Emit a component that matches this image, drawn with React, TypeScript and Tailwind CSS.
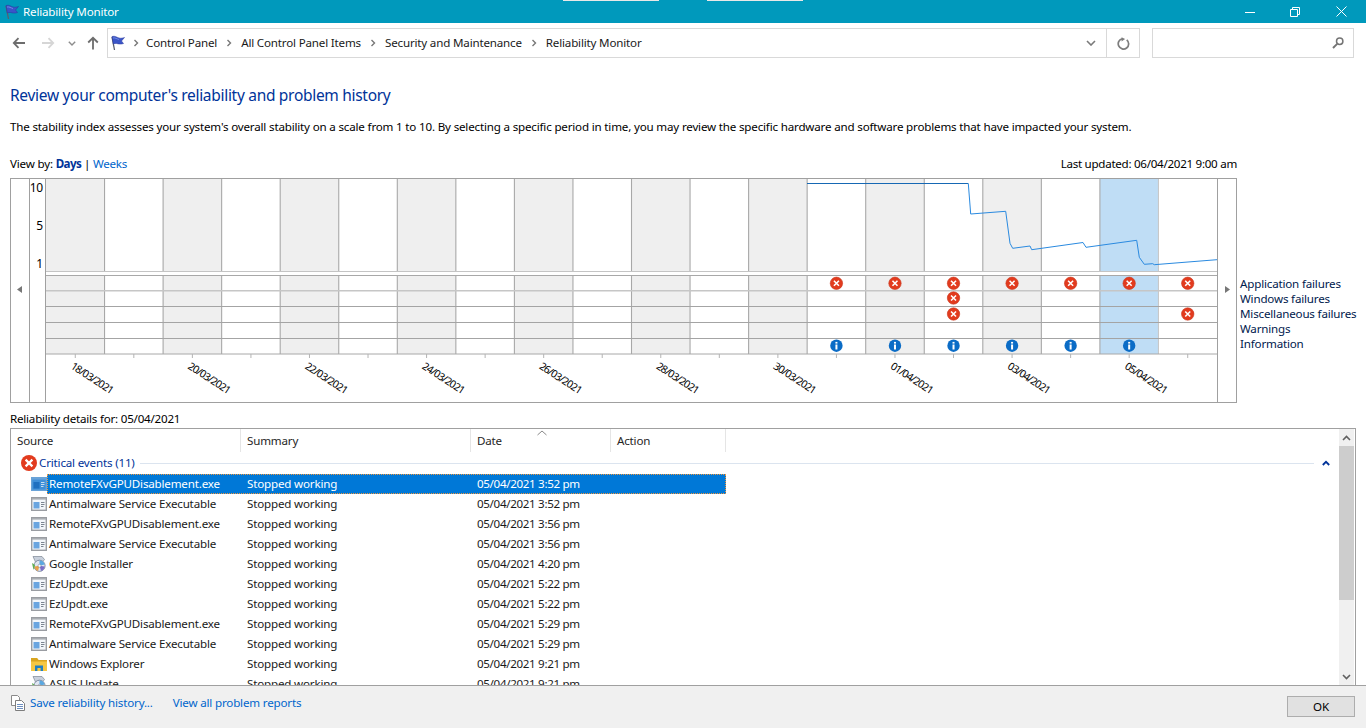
import React from "react";

const F = "[font-family:'Noto_Sans',sans-serif]";
const COL = 58.55;
const X0 = 46;
const colX = (i: number) => X0 + COL * i;
const colC = (i: number) => X0 + COL * i + COL / 2;

function Flag({ className }: { className: string }) {
  return (
    <svg viewBox="0 0 16 16" className={className}>
      <path d="M3 2 L5.5 15" stroke="#5a5f70" strokeWidth="1.3" fill="none" />
      <path d="M3 1.5 C6 0.5 8 2.5 10 3 C12 3.5 14 3 15.5 2.5 L12.5 6 L14.5 8.5 C12 9.5 9.5 9 7.5 8.5 C6.5 8.2 5 8.5 4.3 9 Z" fill="#3a55c8" stroke="#26379a" strokeWidth="0.5" />
      <path d="M4 3 C6 2.5 8 4 10 4.5" stroke="#7f95e8" strokeWidth="0.8" fill="none" />
    </svg>
  );
}

function Sep() {
  return (
    <svg viewBox="0 0 6 8" className="w-[6px] h-[8px] shrink-0">
      <path d="M1.5 1 L4.5 4 L1.5 7" stroke="#777" strokeWidth="1.4" fill="none" />
    </svg>
  );
}

function AppIcon({ selected }: { selected?: boolean }) {
  return (
    <svg viewBox="0 0 16 14" className="w-[16px] h-[14px] shrink-0">
      <rect x="0.7" y="0.7" width="14.6" height="12.6" fill={selected ? "#3f8fd8" : "#f3f6fa"} stroke={selected ? "#6aa3d8" : "#9a9da2"} strokeWidth="1.4" />
      <rect x="1" y="1" width="14" height="1.6" fill={selected ? "#6aa3d8" : "#a9adb2"} />
      <rect x="2.5" y="5" width="6" height="6.5" fill={selected ? "#1f70c0" : "#6aa5e0"} />
      <path d="M10 5.5h3.5M10 7.5h3.5M10 9.5h2.5" stroke={selected ? "#c5def2" : "#7b8490"} strokeWidth="1" />
    </svg>
  );
}

function InstallerIcon() {
  return (
    <svg viewBox="0 0 16 16" className="w-[16px] h-[16px] shrink-0">
      <path d="M2 0.5h9l2.5 3-2 2.5H4.5z" fill="#c8d0dc" stroke="#7d8794" strokeWidth="0.7" />
      <circle cx="8.5" cy="9.8" r="5.6" fill="#dfe6f2" stroke="#6d7890" strokeWidth="0.8" />
      <path d="M8.5 9.8 L8.5 4.5 A5.3 5.3 0 0 1 13.6 8.5 Z" fill="#5aa8e0" />
      <path d="M8.5 9.8 L13.6 10.5 A5.3 5.3 0 0 1 10 15 Z" fill="#7a6cc8" />
      <path d="M8.5 9.8 L7 15 A5.3 5.3 0 0 1 3.3 10.5 Z" fill="#e8a24a" />
      <circle cx="8.5" cy="9.8" r="1.5" fill="#fff" stroke="#6d7890" strokeWidth="0.5" />
      <path d="M1 7l3 2-1.5 5z" fill="#5fae52" />
    </svg>
  );
}

function FolderIcon() {
  return (
    <svg viewBox="0 0 16 14" className="w-[16px] h-[14px] shrink-0">
      <path d="M0 1h6l1.5 2H16v11H0z" fill="#f5c743" />
      <path d="M0 1h6l1.5 2H16v1.4H0z" fill="#d9a520" />
      <path d="M4 13.9V8.5h8v5.4h-2.4v-3H6.4v3z" fill="#1f7fc4" />
    </svg>
  );
}

type Row = { name: string; time: string; icon: "app" | "inst" | "folder" };
const rows: Row[] = [
  { name: "RemoteFXvGPUDisablement.exe", time: "3:52 pm", icon: "app" },
  { name: "Antimalware Service Executable", time: "3:52 pm", icon: "app" },
  { name: "RemoteFXvGPUDisablement.exe", time: "3:56 pm", icon: "app" },
  { name: "Antimalware Service Executable", time: "3:56 pm", icon: "app" },
  { name: "Google Installer", time: "4:20 pm", icon: "inst" },
  { name: "EzUpdt.exe", time: "5:22 pm", icon: "app" },
  { name: "EzUpdt.exe", time: "5:22 pm", icon: "app" },
  { name: "RemoteFXvGPUDisablement.exe", time: "5:29 pm", icon: "app" },
  { name: "Antimalware Service Executable", time: "5:29 pm", icon: "app" },
  { name: "Windows Explorer", time: "9:21 pm", icon: "folder" },
  { name: "ASUS Update", time: "9:21 pm", icon: "inst" },
];

function Err({ x, y }: { x: number; y: number }) {
  return (
    <g>
      <circle cx={x} cy={y} r="6.2" fill="#e23b1e" stroke="#c9381f" strokeWidth="0.6" />
      <path d={`M${x - 2.5} ${y - 2.5}L${x + 2.5} ${y + 2.5}M${x + 2.5} ${y - 2.5}L${x - 2.5} ${y + 2.5}`} stroke="#fff" strokeWidth="1.6" />
    </g>
  );
}

function Info({ x, y }: { x: number; y: number }) {
  return (
    <g>
      <circle cx={x} cy={y} r="6.2" fill="#0b6cc6" />
      <rect x={x - 1} y={y - 3.8} width="2" height="1.7" fill="#fff" />
      <rect x={x - 1} y={y - 1.2} width="2" height="5" fill="#fff" />
    </g>
  );
}

const labels = ["18/03/2021", "20/03/2021", "22/03/2021", "24/03/2021", "26/03/2021", "28/03/2021", "30/03/2021", "01/04/2021", "03/04/2021", "05/04/2021"];
const hLines = [290.7, 306.5, 322.5, 338.5];

function Chart() {
  const cols = Array.from({ length: 20 }, (_, i) => i);
  return (
    <svg viewBox="10 178 1227 225" className="w-[1227px] h-[225px] shrink-0" fontFamily="'Noto Sans',sans-serif">
      {cols.map((i) =>
        i === 18 ? (
          <rect key={i} x={colX(i)} y={179} width={COL} height={175} fill="#bfddf5" />
        ) : i % 2 === 0 ? (
          <rect key={i} x={colX(i)} y={179} width={COL} height={175} fill="#efefef" />
        ) : null
      )}
      <rect x="46" y="271" width="1171" height="4" fill="#fff" />
      {cols.slice(1).map((i) => (
        <g key={i}>
          <line x1={colX(i)} x2={colX(i)} y1="179" y2="271" stroke={i === 19 ? "#c8c8c8" : "#a8a8a8"} strokeWidth="1.1" />
          <line x1={colX(i)} x2={colX(i)} y1="275" y2="354" stroke={i === 19 ? "#c8c8c8" : "#a8a8a8"} strokeWidth="1.1" />
        </g>
      ))}
      <line x1="46" x2="1217" y1="271.5" y2="271.5" stroke="#c4c4c4" />
      <line x1="46" x2="1217" y1="275.5" y2="275.5" stroke="#a8a8a8" />
      {hLines.map((y) => (
        <line key={y} x1="46" x2="1217" y1={y} y2={y} stroke={y === 290.7 ? "#c6c6c6" : "#a4a4a4"} strokeWidth={y === 290.7 ? 1.6 : 1} />
      ))}
      <line x1="46" x2="1217" y1="354" y2="354" stroke="#a8a8a8" />
      {cols.map((i) => (
        <line key={i} x1={colC(i)} x2={colC(i)} y1="354" y2="358" stroke="#b4b4b4" />
      ))}
      <polyline points="807,183.5 968.3,183.5" stroke="#1668b4" fill="none" />
      <polyline
        points="968.3,183.5 970.7,214 1005.7,211.3 1010,243.3 1012.7,248.3 1030,246 1031.7,249.7 1083,242.5 1086,247.3 1136.7,240.3 1139.3,257.3 1144.3,264.3 1152.7,263.7 1154.3,264.7 1217,259.7"
        stroke="#2a8ae0"
        fill="none"
      />
      {[13, 14, 15, 16, 17, 18, 19].map((i) => (
        <Err key={i} x={colC(i)} y={283.3} />
      ))}
      <Err x={colC(15)} y={298} />
      <Err x={colC(15)} y={314} />
      <Err x={colC(19)} y={314} />
      {[13, 14, 15, 16, 17, 18].map((i) => (
        <Info key={i} x={colC(i)} y={345.7} />
      ))}
      <text x="43" y="192" textAnchor="end" fontSize="12" fill="#000">10</text>
      <text x="43" y="230" textAnchor="end" fontSize="12" fill="#000">5</text>
      <text x="43" y="268" textAnchor="end" fontSize="12" fill="#000">1</text>
      <path d="M17 289.5 L22 286 L22 293 Z" fill="#777" />
      <path d="M1225 286 L1230 289.5 L1225 293 Z" fill="#777" />
      {labels.map((t, i) => {
        const x = 70 + 117.1 * i;
        return (
          <text key={t} x={x} y={368} fontSize="10.5" letterSpacing="-0.8" fill="#000" transform={`rotate(33 ${x} 368)`}>
            {t}
          </text>
        );
      })}
      <rect x="10.5" y="178.5" width="1226" height="224" fill="none" stroke="#a0a0a0" />
      <line x1="29.5" x2="29.5" y1="178" y2="403" stroke="#a0a0a0" />
      <line x1="45.5" x2="45.5" y1="178" y2="403" stroke="#a0a0a0" />
      <line x1="1217.5" x2="1217.5" y1="178" y2="403" stroke="#a0a0a0" />
    </svg>
  );
}

export default function App() {
  const crumbs = ["Control Panel", "All Control Panel Items", "Security and Maintenance", "Reliability Monitor"];
  return (
    <div className={`relative w-[1366px] h-[728px] flex flex-col bg-white overflow-hidden text-[11.6px] tracking-[-0.18px] text-black ${F}`}>
      <div className="absolute top-0 left-[563px] w-[96px] h-px bg-[#e8e8e8]" />
      <div className="absolute top-0 left-[707px] w-[96px] h-px bg-[#e8e8e8]" />

      {/* Title bar */}
      <div className="h-[23px] shrink-0 bg-[#0099bc] flex items-center text-white">
        <Flag className="w-[16px] h-[16px] ml-[3px] mr-[4px]" />
        <span>Reliability Monitor</span>
        <div className="ml-auto flex items-center h-full">
          <svg viewBox="0 0 10 10" className="w-[10px] h-[10px] mr-[35px]"><path d="M0 5.5H10" stroke="#fff" /></svg>
          <svg viewBox="0 0 10 10" className="w-[10px] h-[10px] mr-[36px]"><path d="M0.5 2.5H7.5V9.5H0.5ZM2.5 2.5V0.5H9.5V7.5H7.5" stroke="#fff" fill="none" /></svg>
          <svg viewBox="0 0 11 11" className="w-[11px] h-[11px] mr-[19px]"><path d="M0.5 0.5L10.5 10.5M10.5 0.5L0.5 10.5" stroke="#fff" /></svg>
        </div>
      </div>

      {/* Toolbar */}
      <div className="h-[40px] shrink-0 flex items-start pt-[5px]">
        <div className="w-[107px] h-[30px] shrink-0 flex items-center">
          <svg viewBox="0 0 14 12" className="w-[14px] h-[12px] ml-[12px]"><path d="M13 6H2M6.5 1.2L1.8 6l4.7 4.8" stroke="#6d6d6d" strokeWidth="1.8" fill="none" /></svg>
          <svg viewBox="0 0 14 12" className="w-[14px] h-[12px] ml-[15px]"><path d="M1 6h11M7.5 1.2L12.2 6l-4.7 4.8" stroke="#d6d6d6" strokeWidth="1.8" fill="none" /></svg>
          <svg viewBox="0 0 8 5" className="w-[8px] h-[5px] ml-[13px]"><path d="M0.8 0.8L4 4l3.2-3.2" stroke="#8c8c8c" strokeWidth="1.4" fill="none" /></svg>
          <svg viewBox="0 0 12 14" className="w-[12px] h-[14px] ml-[11px]"><path d="M6 13.5V2M1.2 6.5L6 1.8l4.8 4.7" stroke="#6d6d6d" strokeWidth="1.8" fill="none" /></svg>
        </div>
        <div className="w-[1033px] h-[30px] border border-[#d9d9d9] flex items-center shrink-0">
          <Flag className="w-[16px] h-[16px] ml-[1px] mr-[8px] shrink-0" />
          <Sep />
          <div className="flex items-center ml-[7px] text-[#1a1a1a]">
            {crumbs.map((c, i) => (
              <React.Fragment key={c}>
                <span>{c}</span>
                {i < 3 && <span className="mx-[9px]"><Sep /></span>}
              </React.Fragment>
            ))}
          </div>
          <svg viewBox="0 0 10 6" className="w-[10px] h-[6px] ml-auto mr-[10px]"><path d="M1 1l4 4 4-4" stroke="#7a7a7a" strokeWidth="1.6" fill="none" /></svg>
          <div className="w-[33px] h-full border-l border-[#d9d9d9] flex items-center justify-center">
            <svg viewBox="0 0 12 12" className="w-[13px] h-[13px]"><path d="M9 2.6A4.8 4.8 0 1 1 5 1.6" stroke="#7d7d7d" strokeWidth="1.6" fill="none" /><path d="M4.2 0.2V4.2L7.5 1.9Z" fill="#7d7d7d" /></svg>
          </div>
        </div>
        <div className="ml-[12px] w-[202px] h-[30px] border border-[#d9d9d9] flex items-center justify-end pr-[9px] shrink-0">
          <svg viewBox="0 0 12 12" className="w-[12px] h-[12px]"><circle cx="7.7" cy="4.3" r="3.2" stroke="#747474" strokeWidth="1.5" fill="none" /><path d="M5.2 6.8L1 11" stroke="#747474" strokeWidth="1.9" /></svg>
        </div>
      </div>

      {/* Main */}
      <div className="flex-1 min-h-0 flex flex-col pl-[10px]">
        <h1 className="mt-[21px] h-[23px] flex items-center text-[15.5px] tracking-[-0.3px] text-[#003399] font-normal">Review your computer's reliability and problem history</h1>
        <p className="mt-[12px] h-[16px] flex items-center whitespace-nowrap">The stability index assesses your system's overall stability on a scale from 1 to 10. By selecting a specific period in time, you may review the specific hardware and software problems that have impacted your system.</p>
        <div className="mt-[21px] h-[16px] w-[1227px] flex items-center justify-between">
          <span>View by: <b className="font-bold tracking-[-0.6px] text-[#003399]">Days</b> | <span className="text-[#0066cc] tracking-[-0.3px]">Weeks</span></span>
          <span className="tracking-[-0.28px]">Last updated: 06/04/2021 9:00 am</span>
        </div>
        <div className="mt-[6px] flex items-start h-[225px]">
          <Chart />
          <div className="ml-[3px] mt-[98px] flex flex-col leading-[15px] text-[#00204d] whitespace-nowrap">
            <span>Application failures</span>
            <span>Windows failures</span>
            <span>Miscellaneous failures</span>
            <span>Warnings</span>
            <span>Information</span>
          </div>
        </div>
        <div className="mt-[8px] h-[16px] flex items-center tracking-[-0.22px]">Reliability details for: 05/04/2021</div>

        {/* Table */}
        <div className="mt-[1px] w-[1346px] h-[257px] border-x border-t border-[#a0a0a0] flex min-h-0">
          <div className="flex-1 min-w-0 overflow-hidden relative">
            <svg viewBox="0 0 10 6" className="absolute left-[526px] top-[1px] w-[10px] h-[6px]"><path d="M0.5 5L5 1l4.5 4" stroke="#8a8a8a" fill="none" /></svg>
            <div className="flex h-[23px] text-[#262626]">
              <div className="w-[230px] pl-[6px] flex items-center border-r border-[#e5e5e5]">Source</div>
              <div className="w-[230px] pl-[6px] flex items-center border-r border-[#e5e5e5]">Summary</div>
              <div className="w-[140px] pl-[6px] flex items-center border-r border-[#e5e5e5]">Date</div>
              <div className="w-[115px] pl-[6px] flex items-center border-r border-[#e5e5e5]">Action</div>
            </div>
            <div className="h-[22px] flex items-center pl-[10px]">
              <svg viewBox="0 0 16 16" className="w-[16px] h-[16px] shrink-0">
                <circle cx="8" cy="8" r="8" fill="#e23b1e" />
                <path d="M4.6 4.6L11.4 11.4M11.4 4.6L4.6 11.4" stroke="#fff" strokeWidth="2.2" />
              </svg>
              <span className="ml-[2px] text-[#003399] whitespace-nowrap">Critical events (11)</span>
              <div className="ml-[5px] flex-1 h-px bg-[#dbe4ef]" />
              <svg viewBox="0 0 8 6" className="w-[8px] h-[6px] ml-[8px] mr-[9px]"><path d="M0.8 5L4 1.8 7.2 5" stroke="#003399" strokeWidth="1.8" fill="none" /></svg>
            </div>
            {rows.map((r, i) => {
              const sel = i === 0;
              return (
                <div key={i} className="h-[20px] flex items-center pl-[20px]">
                  <div className="w-[16px] flex items-center justify-center shrink-0">
                    {r.icon === "app" && <AppIcon selected={sel} />}
                    {r.icon === "inst" && <InstallerIcon />}
                    {r.icon === "folder" && <FolderIcon />}
                  </div>
                  <div className={`w-[679px] h-[20px] flex items-center whitespace-nowrap ${sel ? "bg-[#0078d7] text-white border border-dotted border-[#f0963c]" : "text-[#1a1a1a]"}`}>
                    <span className={sel ? "w-[193px] pl-[1px]" : "w-[194px] pl-[2px]"}>{r.name}</span>
                    <span className="w-[230px] pl-[6px]">Stopped working</span>
                    <span className="w-[140px] pl-[6px] tracking-[-0.33px]">05/04/2021 {r.time}</span>
                  </div>
                </div>
              );
            })}
          </div>
          <div className="w-[15px] shrink-0 bg-[#f0f0f0] flex flex-col mr-px">
            <div className="h-[17px] flex items-center justify-center">
              <svg viewBox="0 0 9 6" className="w-[9px] h-[6px]"><path d="M1 5L4.5 1.5 8 5" stroke="#606060" strokeWidth="1.6" fill="none" /></svg>
            </div>
            <div className="h-[154px] bg-[#cdcdcd]" />
            <div className="flex-1" />
            <div className="h-[17px] flex items-center justify-center">
              <svg viewBox="0 0 9 6" className="w-[9px] h-[6px]"><path d="M1 1L4.5 4.5 8 1" stroke="#606060" strokeWidth="1.6" fill="none" /></svg>
            </div>
          </div>
        </div>
      </div>

      {/* Footer */}
      <div className="h-[43px] shrink-0 bg-[#f0f0f0] border-t border-[#a0a0a0] flex items-start">
        <svg viewBox="0 0 14 16" className="w-[14px] h-[16px] ml-[11px] mt-[9px] shrink-0">
          <path d="M0.5 0.5H6.5L8.5 2.5V10.5H0.5Z" fill="#fff" stroke="#8a8a8a" />
          <path d="M4.5 5.5H10.5L13.5 8.5V15.5H4.5Z" fill="#fff" stroke="#7d7d7d" />
          <path d="M6 9.5H12M6 11.5H12M6 13.5H12" stroke="#6d8fc0" />
        </svg>
        <span className="ml-[5px] mt-[8px] text-[#0066cc]">Save reliability history...</span>
        <span className="ml-[20px] mt-[8px] text-[#0066cc]">View all problem reports</span>
        <div className="ml-auto mr-[11px] mt-[10px] w-[68px] h-[21px] bg-[#e1e1e1] border border-[#adadad] flex items-center justify-center">OK</div>
      </div>
    </div>
  );
}
